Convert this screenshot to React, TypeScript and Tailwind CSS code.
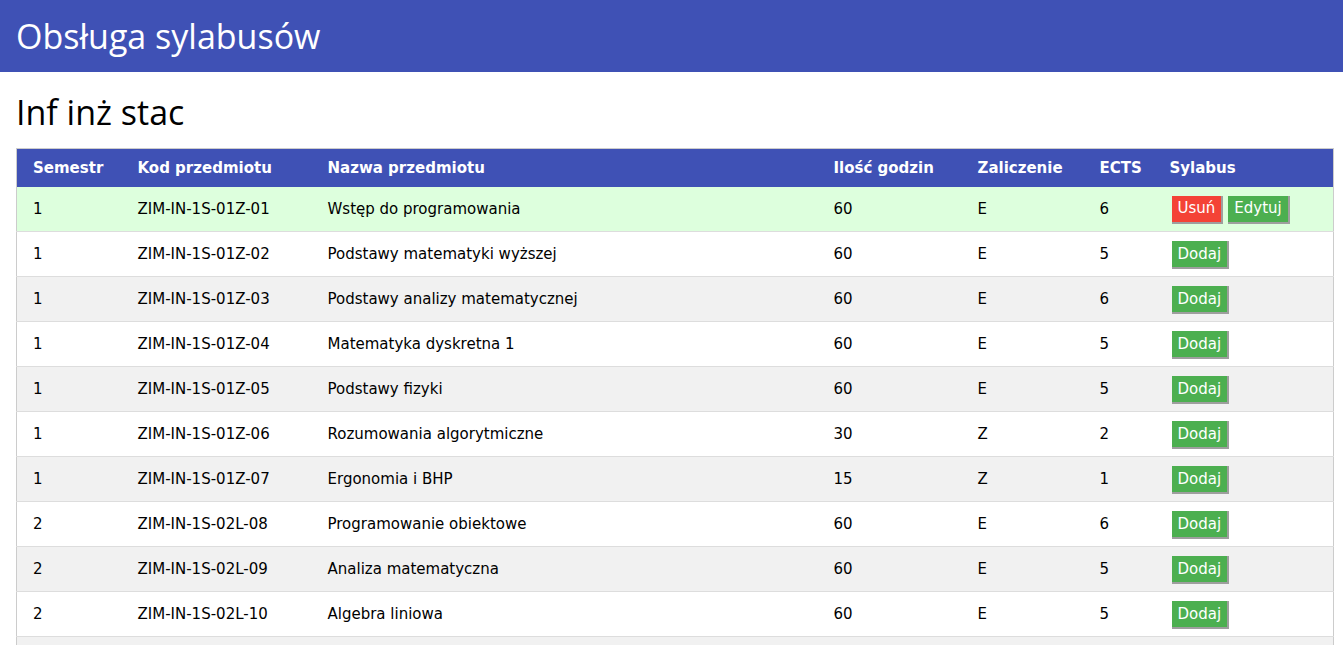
const rows = [
  { sem: "1", kod: "ZIM-IN-1S-01Z-01", nazwa: "Wstęp do programowania", godz: "60", zal: "E", ects: "6", has: true },
  { sem: "1", kod: "ZIM-IN-1S-01Z-02", nazwa: "Podstawy matematyki wyższej", godz: "60", zal: "E", ects: "5" },
  { sem: "1", kod: "ZIM-IN-1S-01Z-03", nazwa: "Podstawy analizy matematycznej", godz: "60", zal: "E", ects: "6" },
  { sem: "1", kod: "ZIM-IN-1S-01Z-04", nazwa: "Matematyka dyskretna 1", godz: "60", zal: "E", ects: "5" },
  { sem: "1", kod: "ZIM-IN-1S-01Z-05", nazwa: "Podstawy fizyki", godz: "60", zal: "E", ects: "5" },
  { sem: "1", kod: "ZIM-IN-1S-01Z-06", nazwa: "Rozumowania algorytmiczne", godz: "30", zal: "Z", ects: "2" },
  { sem: "1", kod: "ZIM-IN-1S-01Z-07", nazwa: "Ergonomia i BHP", godz: "15", zal: "Z", ects: "1" },
  { sem: "2", kod: "ZIM-IN-1S-02L-08", nazwa: "Programowanie obiektowe", godz: "60", zal: "E", ects: "6" },
  { sem: "2", kod: "ZIM-IN-1S-02L-09", nazwa: "Analiza matematyczna", godz: "60", zal: "E", ects: "5" },
  { sem: "2", kod: "ZIM-IN-1S-02L-10", nazwa: "Algebra liniowa", godz: "60", zal: "E", ects: "5" },
  { sem: "2", kod: "ZIM-IN-1S-02L-11", nazwa: "Systemy operacyjne", godz: "60", zal: "E", ects: "5" },
];

const tahoma = { fontFamily: "Tahoma, 'DejaVu Sans', sans-serif" };

function Btn({ label, color }: { label: string; color: "red" | "green" }) {
  return (
    <button
      type="button"
      className={
        "h-[26px] px-[6px] text-[15px] leading-none text-white shadow-[1px_1px_0_1px_#9e9e9e] " +
        (color === "red" ? "bg-[#f44336]" : "bg-[#4caf50]")
      }
    >
      {label}
    </button>
  );
}

export default function App() {
  return (
    <div className="min-h-[645px] bg-white text-black">
      {/* Pasek tytulowy */}
      <div className="flex h-[72px] items-center bg-[#3f51b5] px-4">
        <h1 className="font-['Open_Sans',sans-serif] text-[34px] leading-none text-white">
          Obsługa sylabusów
        </h1>
      </div>

      <div className="pl-4 pr-[9px]">
        <h2 className="pt-[18px] pb-[14px] font-['Open_Sans',sans-serif] text-[34px] leading-[44px]">
          Inf inż stac
        </h2>

        <table className="w-full border-collapse border border-[#cccccc] text-[15px]" style={tahoma}>
          <thead>
            <tr className="h-[38px] bg-[#3f51b5] text-left text-white">
              <th className="w-[113px] pl-4 font-bold">Semestr</th>
              <th className="w-[190px] pl-2 font-bold">Kod przedmiotu</th>
              <th className="w-[506px] pl-2 font-bold">Nazwa przedmiotu</th>
              <th className="w-[144px] pl-2 font-bold">Ilość godzin</th>
              <th className="w-[122px] pl-2 font-bold">Zaliczenie</th>
              <th className="w-[70px] pl-2 font-bold">ECTS</th>
              <th className="pl-2 font-bold">Sylabus</th>
            </tr>
          </thead>
          <tbody>
            {rows.map((r, i) => (
              <tr
                key={r.kod}
                className={
                  "h-[45px] border-b border-[#dddddd] " +
                  (r.has ? "bg-[#ddffdd]" : i % 2 === 0 ? "bg-[#f1f1f1]" : "bg-white")
                }
              >
                <td className="pl-4">{r.sem}</td>
                <td className="pl-2">{r.kod}</td>
                <td className="pl-2">{r.nazwa}</td>
                <td className="pl-2">{r.godz}</td>
                <td className="pl-2">{r.zal}</td>
                <td className="pl-2">{r.ects}</td>
                <td className="pl-[10px]">
                  <div className="flex gap-[7px]">
                    {r.has ? (
                      <>
                        <Btn label="Usuń" color="red" />
                        <Btn label="Edytuj" color="green" />
                      </>
                    ) : (
                      <Btn label="Dodaj" color="green" />
                    )}
                  </div>
                </td>
              </tr>
            ))}
          </tbody>
        </table>
      </div>
    </div>
  );
}
